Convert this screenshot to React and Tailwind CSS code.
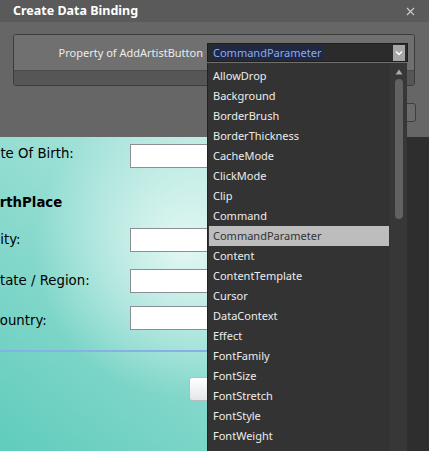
import React from 'react';

const items = [
  'AllowDrop', 'Background', 'BorderBrush', 'BorderThickness', 'CacheMode', 'ClickMode', 'Clip',
  'Command', 'CommandParameter', 'Content', 'ContentTemplate', 'Cursor', 'DataContext', 'Effect',
  'FontFamily', 'FontSize', 'FontStretch', 'FontStyle', 'FontWeight',
];

const selected = 'CommandParameter';

const ui = { fontFamily: '"Noto Sans", "Open Sans", sans-serif' };
const form = { fontFamily: '"DejaVu Sans", Verdana, sans-serif' };

const Field = ({ label, offset, shift = 0, className = '' }) => (
  <div className={`flex items-center h-[24px] ${className}`}>
    <span className={`w-[130px] shrink-0 whitespace-nowrap text-[13.3px] text-black ${offset}`} style={{ position: 'relative', top: shift }}>
      {label}
    </span>
    <div className="h-[24px] w-[120px] shrink-0 bg-white border border-[#8a8f96]" />
  </div>
);

export default function App() {
  return (
    <div className="relative w-[429px] h-[451px] overflow-hidden bg-[#666666] flex flex-col" style={ui}>
      {/* title bar */}
      <div className="h-[22px] shrink-0 bg-[#5a5a5a] flex items-center justify-between pl-[13px] pr-[14px]">
        <span className="text-[12.5px] font-bold text-white leading-none">Create Data Binding</span>
        <svg width="9" height="9" viewBox="0 0 9 9" className="text-[#c8c8c8]">
          <path d="M1 1L8 8M8 1L1 8" stroke="currentColor" strokeWidth="1.2" fill="none" />
        </svg>
      </div>

      {/* header area */}
      <div className="h-[115px] shrink-0 flex flex-col">
        <div className="mt-[12px] mx-[13px] w-[402px] h-[52px] border border-[#3c3c3c] rounded-[3px] overflow-hidden flex flex-col shadow-[inset_0_1px_0_#7d7d7d]">
          <div className="h-[35px] bg-[#707070] flex items-start pt-[8px] pr-[6px]">
            <span className="flex-1 text-right pr-[4px] text-[11px] text-[#ececec] leading-[19px] whitespace-nowrap">
              Property of AddArtistButton
            </span>
            <div className="w-[201px] h-[19px] bg-[#2b2b2b] border border-[#1e1e1e] flex items-center pl-[3px] pr-[2px]">
              <span className="bg-[#1e2946] text-[#93a8e4] text-[11px] leading-[15px] px-[2px]">CommandParameter</span>
              <div className="ml-auto w-[12px] h-[16px] bg-[#a6a6a6] flex items-center justify-center">
                <svg width="8" height="6" viewBox="0 0 8 6">
                  <path d="M1 1.5L4 4.5L7 1.5" stroke="#ffffff" strokeWidth="1.5" fill="none" />
                </svg>
              </div>
            </div>
          </div>
          <div className="flex-1 bg-[#565656] border-t border-[#4a4a4a]" />
        </div>
        <div className="mt-[17px] ml-auto mr-[13px] w-[60px] h-[19px] border border-[#3e3e3e] rounded-[3px] bg-[#6b6b6b]" />
      </div>

      {/* content */}
      <div className="flex-1 flex">
        <div
          className="flex-1 overflow-hidden bg-[image:radial-gradient(circle_at_185px_110px,rgba(245,253,251,0.8)_0px,rgba(245,253,251,0)_150px),linear-gradient(to_top_right,#60ccbc,#cbefe9)]"
          style={form}
        >
          <Field label="Date Of Birth:" offset="-ml-[18px] mr-[18px]" shift={-2} className="mt-[7px]" />
          <div className="mt-[26px] h-[18px] leading-[18px] -ml-[15px] text-[13.3px] font-bold text-black whitespace-nowrap">
            BirthPlace
          </div>
          <Field label="City:" offset="-ml-[9px] mr-[9px]" className="mt-[16px]" />
          <Field label="State / Region:" offset="-ml-[8.5px] mr-[8.5px]" className="mt-[17px]" />
          <Field label="Country:" offset="-ml-[9.5px] mr-[9.5px]" shift={3} className="mt-[13px]" />
          <div className="mt-[20px] h-[2px] bg-[#86b0e6]" />
          <div className="mt-[25px] pl-[189px]">
            <div className="w-[60px] h-[24px] rounded-[3px] border border-[#b8bcc0] bg-linear-to-b from-white to-[#e4e6e8]" />
          </div>
        </div>
        <div className="w-[22px] shrink-0 bg-[#2e2e2e]" />
      </div>

      {/* open dropdown list */}
      <div className="absolute left-[207px] top-[63px] w-[200px] bottom-0 bg-[#333333] border-l border-[#232323] flex">
        <div className="w-[180px] ml-[1px] pt-[3px] flex flex-col">
          {items.map((name) => (
            <div
              key={name}
              className={`h-[20px] leading-[20px] pl-[4px] text-[11px] whitespace-nowrap ${
                name === selected ? 'bg-[#bdbdbd] text-[#333333]' : 'text-[#ececec]'
              }`}
            >
              {name}
            </div>
          ))}
        </div>
        <div className="ml-auto w-[17px] bg-[#373737] flex flex-col items-center">
          <svg width="8" height="6" viewBox="0 0 8 6" className="mt-[6px]">
            <path d="M4 0.5L7.5 5.5H0.5Z" fill="#a9a9a9" />
          </svg>
          <div className="mt-[4px] w-[8px] h-[140px] rounded-[4px] bg-[#616161]" />
        </div>
      </div>
    </div>
  );
}
